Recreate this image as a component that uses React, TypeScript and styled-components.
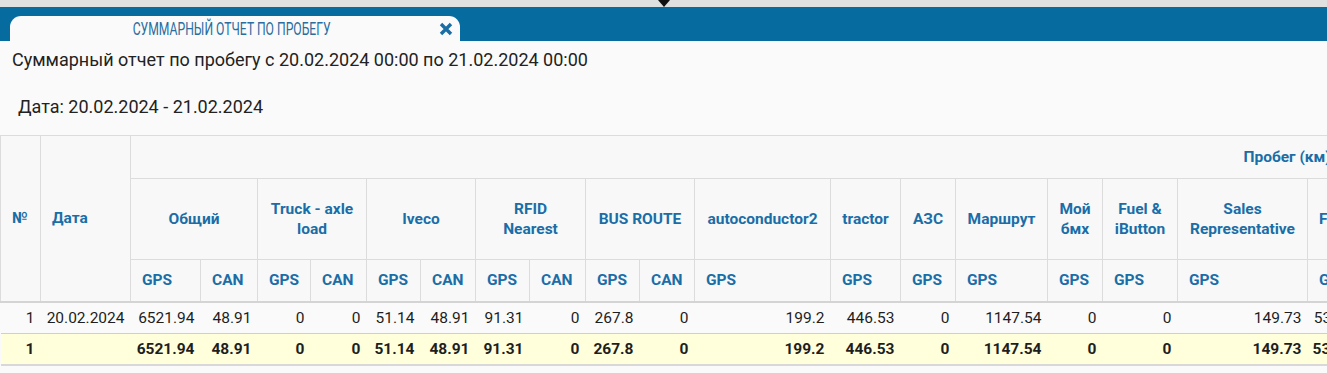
import React from 'react';
import styled, { createGlobalStyle } from 'styled-components';

const GlobalStyle = createGlobalStyle`
  html, body {
    margin: 0;
    padding: 0;
    background: #fafafa;
    overflow: hidden;
  }
  body {
    font-family: Roboto, "Liberation Sans", Arial, sans-serif;
    color: #222;
  }
`;

const Page = styled.div`
  width: 1327px;
  height: 373px;
  overflow: hidden;
  background: #fafafa;
`;

const TopStrip = styled.div`
  height: 7px;
  background: #e0e0e0;
  display: flex;
  justify-content: center;
`;

const Marker = styled.div`
  width: 0;
  height: 0;
  border-left: 6px solid transparent;
  border-right: 6px solid transparent;
  border-top: 7px solid #111;
`;

const TabBar = styled.div`
  height: 34px;
  box-sizing: border-box;
  background: #066ca0;
  padding: 9px 0 0 10px;
  display: flex;
  align-items: flex-end;
`;

const Tab = styled.div`
  width: 450px;
  height: 25px;
  background: #fafafa;
  border-radius: 11px 11px 0 0;
  display: flex;
  align-items: center;
`;

const TabTitle = styled.div`
  flex: 1;
  display: flex;
  justify-content: center;
  padding-left: 14px;
`;

const TabTitleText = styled.span`
  display: inline-block;
  font-family: Roboto, sans-serif;
  font-size: 19px;
  line-height: 25px;
  color: #2a6d9e;
  white-space: nowrap;
  transform: scaleX(0.64);
`;

const CloseButton = styled.div`
  width: 14px;
  height: 14px;
  margin: 0 7px 0 0;
  display: flex;
`;

const Content = styled.div`
  padding-top: 8px;
`;

const ReportTitle = styled.div`
  font-size: 18px;
  line-height: 22px;
  padding-left: 12px;
`;

const DateLine = styled.div`
  font-size: 18px;
  line-height: 22px;
  padding-left: 18px;
  margin-top: 25px;
`;

const TableWrap = styled.div`
  margin-top: 17px;
  width: 1327px;
  overflow: hidden;
`;

const Table = styled.table`
  border-collapse: collapse;
  table-layout: fixed;
  width: 2403px;
  font-size: 15.5px;
`;

const Th = styled.th<{ $align?: string; $h?: number }>`
  background: #f8f8f8;
  border: 1px solid #dcdcdc;
  color: #1a6ea7;
  font-weight: 700;
  font-size: 15.5px;
  line-height: 20px;
  text-align: ${(p) => p.$align || 'center'};
  padding: 0 11px;
  height: ${(p) => (p.$h ? `${p.$h}px` : 'auto')};
  box-sizing: border-box;
  white-space: normal;
`;

const HeadRow = styled.tr<{ $last?: boolean }>`
  ${(p) => (p.$last ? 'border-bottom: 2px solid #d4d4d4;' : '')}
`;

const DataRow = styled.tr<{ $total?: boolean }>`
  height: ${(p) => (p.$total ? 31 : 32)}px;
  background: ${(p) => (p.$total ? '#ffffdc' : '#fafafa')};
  font-weight: ${(p) => (p.$total ? 700 : 400)};
  border-bottom: ${(p) => (p.$total ? '2px solid #d8d8d8' : '1px solid #cfcfcf')};
`;

const Td = styled.td`
  text-align: right;
  padding: 0 6px 0 4px;
  white-space: nowrap;
  color: #1e1e1e;
`;

type Group = {
  name: string;
  subs: string[];
  widths: number[];
  values: string[];
  align?: string;
};

const groups: Group[] = [
  { name: 'Общий', subs: ['GPS', 'CAN'], widths: [70, 57], values: ['6521.94', '48.91'] },
  { name: 'Truck - axle load', subs: ['GPS', 'CAN'], widths: [53, 56], values: ['0', '0'] },
  { name: 'Iveco', subs: ['GPS', 'CAN'], widths: [54, 55], values: ['51.14', '48.91'] },
  { name: 'RFID Nearest', subs: ['GPS', 'CAN'], widths: [54, 56], values: ['91.31', '0'] },
  { name: 'BUS ROUTE', subs: ['GPS', 'CAN'], widths: [54, 55], values: ['267.8', '0'] },
  { name: 'autoconductor2', subs: ['GPS'], widths: [136], values: ['199.2'] },
  { name: 'tractor', subs: ['GPS'], widths: [70], values: ['446.53'] },
  { name: 'АЗС', subs: ['GPS'], widths: [55], values: ['0'] },
  { name: 'Маршрут', subs: ['GPS'], widths: [92], values: ['1147.54'] },
  { name: 'Мой бмх', subs: ['GPS'], widths: [55], values: ['0'] },
  { name: 'Fuel & iButton', subs: ['GPS'], widths: [75], values: ['0'] },
  { name: 'Sales Representative', subs: ['GPS'], widths: [130], values: ['149.73'] },
  { name: 'Fuel level', subs: ['GPS', 'CAN'], widths: [60, 60], values: ['538.12', '0'], align: 'left' },
  { name: 'Delivery', subs: ['GPS', 'CAN'], widths: [80, 80], values: ['0', '0'] },
  { name: 'Service', subs: ['GPS', 'CAN'], widths: [80, 80], values: ['0', '0'] },
  { name: 'Trailer', subs: ['GPS', 'CAN'], widths: [80, 80], values: ['0', '0'] },
  { name: 'Test', subs: ['GPS'], widths: [536], values: ['0'] },
];

const totalCols = groups.reduce((n, g) => n + g.subs.length, 0);

function CloseIcon() {
  return (
    <svg width="14" height="14" viewBox="0 0 14 14">
      <path d="M2 2 L12 12 M12 2 L2 12" stroke="#1b6ea5" strokeWidth="3.4" strokeLinecap="butt" />
    </svg>
  );
}

export default function App() {
  return (
    <Page>
      <GlobalStyle />
      <TopStrip>
        <Marker />
      </TopStrip>
      <TabBar>
        <Tab>
          <TabTitle>
            <TabTitleText>СУММАРНЫЙ ОТЧЕТ ПО ПРОБЕГУ</TabTitleText>
          </TabTitle>
          <CloseButton>
            <CloseIcon />
          </CloseButton>
        </Tab>
      </TabBar>
      <Content>
        <ReportTitle>Суммарный отчет по пробегу с 20.02.2024 00:00 по 21.02.2024 00:00</ReportTitle>
        <DateLine>Дата: 20.02.2024 - 21.02.2024</DateLine>
        <TableWrap>
          <Table>
            <colgroup>
              <col style={{ width: 40 }} />
              <col style={{ width: 90 }} />
              {groups.flatMap((g) =>
                g.widths.map((w, i) => <col key={g.name + i} style={{ width: w }} />)
              )}
            </colgroup>
            <thead>
              <HeadRow>
                <Th rowSpan={3} $align="left">№</Th>
                <Th rowSpan={3} $align="left">Дата</Th>
                <Th colSpan={totalCols} $h={43}>Пробег (км)</Th>
              </HeadRow>
              <HeadRow>
                {groups.map((g) => (
                  <Th key={g.name} colSpan={g.subs.length} $h={81} $align={g.align}>
                    {g.name}
                  </Th>
                ))}
              </HeadRow>
              <HeadRow $last>
                {groups.flatMap((g) =>
                  g.subs.map((s) => (
                    <Th key={g.name + s} $align="left" $h={42}>
                      {s}
                    </Th>
                  ))
                )}
              </HeadRow>
            </thead>
            <tbody>
              <DataRow>
                <Td>1</Td>
                <Td>20.02.2024</Td>
                {groups.flatMap((g) => g.values.map((v, i) => <Td key={g.name + i}>{v}</Td>))}
              </DataRow>
              <DataRow $total>
                <Td>1</Td>
                <Td />
                {groups.flatMap((g) => g.values.map((v, i) => <Td key={g.name + i}>{v}</Td>))}
              </DataRow>
            </tbody>
          </Table>
        </TableWrap>
      </Content>
    </Page>
  );
}
